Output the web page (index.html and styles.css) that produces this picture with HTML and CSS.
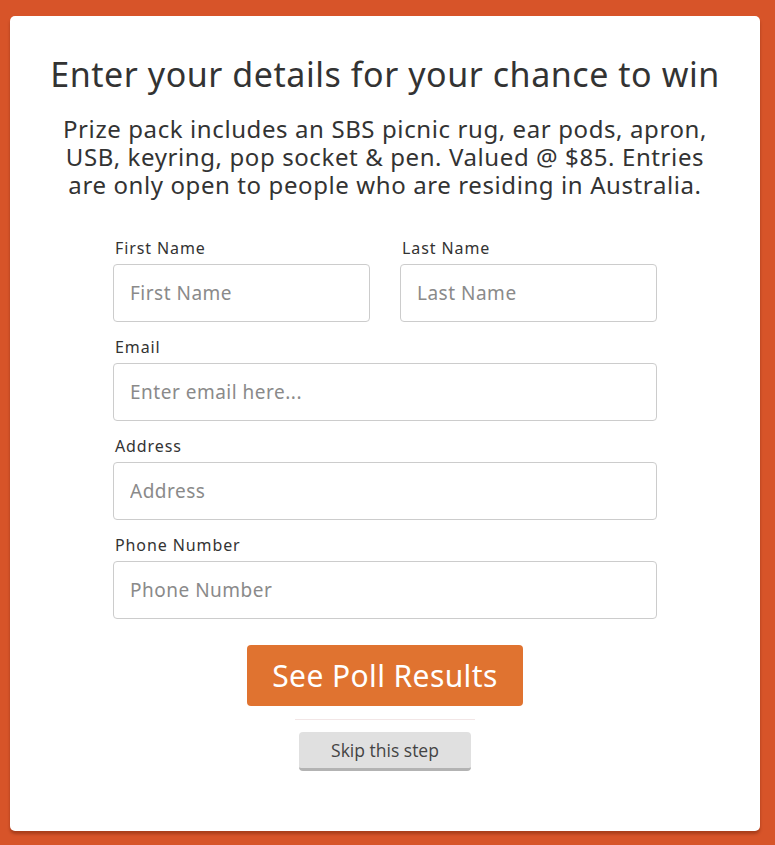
FILE: index.html
```html
<!DOCTYPE html>
<html lang="en">
<head>
<meta charset="utf-8">
<title>Enter your details</title>
<link rel="stylesheet" href="styles.css">
</head>
<body>
<main class="card">
  <h1 class="title">Enter your details for your chance to win</h1>
  <p class="intro">Prize pack includes an SBS picnic rug, ear pods, apron, USB, keyring, pop socket &amp; pen. Valued @ $85. Entries are only open to people who are residing in Australia.</p>
  <form class="form">
    <div class="row">
      <label class="field">
        <span class="label">First Name</span>
        <input class="input" type="text" placeholder="First Name">
      </label>
      <label class="field">
        <span class="label">Last Name</span>
        <input class="input" type="text" placeholder="Last Name">
      </label>
    </div>
    <label class="field">
      <span class="label">Email</span>
      <input class="input" type="email" placeholder="Enter email here...">
    </label>
    <label class="field">
      <span class="label">Address</span>
      <input class="input" type="text" placeholder="Address">
    </label>
    <label class="field">
      <span class="label">Phone Number</span>
      <input class="input" type="tel" placeholder="Phone Number">
    </label>
    <div class="actions">
      <button class="submit" type="button">See Poll Results</button>
      <hr class="divider">
      <button class="skip" type="button">Skip this step</button>
    </div>
  </form>
</main>
</body>
</html>
```

FILE: styles.css
```css
html, body {
  margin: 0;
  padding: 0;
}
body {
  background: #d75429;
  font-family: "Noto Sans", "Open Sans", sans-serif;
  color: #333;
  padding: 16px 15px 14px 10px;
}
.card {
  background: #fff;
  border-radius: 5px;
  width: 750px;
  height: 815px;
  box-sizing: border-box;
  padding-top: 38px;
  box-shadow: 0 3px 3px rgba(80, 20, 0, 0.35);
  display: flex;
  flex-direction: column;
  align-items: center;
}
.title {
  margin: 0;
  font-size: 34px;
  font-weight: 400;
  line-height: 40px;
  letter-spacing: 0.55px;
  color: #333;
  text-align: center;
  white-space: nowrap;
}
.intro {
  margin: 21px 0 0;
  width: 670px;
  font-size: 24px;
  line-height: 28px;
  letter-spacing: 0.6px;
  text-align: center;
  color: #333;
}
.form {
  margin-top: 38px;
  width: 544px;
  display: flex;
  flex-direction: column;
  gap: 14px;
}
.row {
  display: flex;
  gap: 30px;
}
.row .field {
  flex: 1;
  min-width: 0;
}
.field {
  display: flex;
  flex-direction: column;
  gap: 5px;
}
.label {
  font-size: 16px;
  line-height: 22px;
  letter-spacing: 0.9px;
  padding-left: 2px;
  color: #333;
}
.input {
  width: 100%;
  min-width: 0;
  height: 58px;
  box-sizing: border-box;
  border: 1px solid #ccc;
  border-radius: 4px;
  padding: 0 16px;
  font-family: inherit;
  font-size: 19px;
  letter-spacing: 0.5px;
  color: #333;
  background: #fff;
}
.input::placeholder {
  color: #8a8a8a;
}
.actions {
  margin-top: 12px;
  display: flex;
  flex-direction: column;
  align-items: center;
}
.submit {
  width: 276px;
  height: 61px;
  border: 0;
  border-radius: 4px;
  background: #e07330;
  color: #fff;
  font-family: inherit;
  font-size: 30px;
  letter-spacing: 0.4px;
}
.divider {
  width: 180px;
  margin: 13px 0 12px;
  border: 0;
  border-top: 1px solid #f2e6e6;
}
.skip {
  width: 172px;
  height: 39px;
  border: 0;
  border-bottom: 3px solid #b3b3b3;
  border-radius: 4px;
  background: #e0e0e0;
  color: #444;
  font-family: "Open Sans", sans-serif;
  font-size: 17.5px;
}
```
